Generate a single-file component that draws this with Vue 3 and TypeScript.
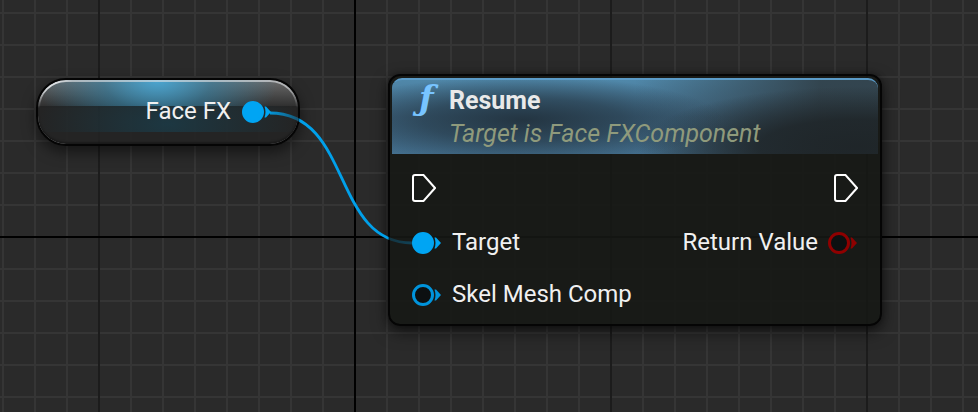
<script setup lang="ts">
type PinKind = 'exec' | 'object' | 'bool'

interface Pin {
  label: string
  kind: PinKind
  connected?: boolean
}

interface PinRow {
  input?: Pin
  output?: Pin
}

const variableNode: Pin = { label: 'Face FX', kind: 'object', connected: true }

const functionNode = {
  title: 'Resume',
  subtitle: 'Target is Face FXComponent',
}

const execRow: PinRow = {
  input: { label: '', kind: 'exec' },
  output: { label: '', kind: 'exec' },
}

const dataRows: PinRow[] = [
  {
    input: { label: 'Target', kind: 'object', connected: true },
    output: { label: 'Return Value', kind: 'bool' },
  },
  { input: { label: 'Skel Mesh Comp', kind: 'object' } },
]
</script>

<template>
  <main class="graph">
    <section class="node variable">
      <span class="label">{{ variableNode.label }}</span>
      <svg class="pin object connected" viewBox="0 0 30 24">
        <circle cx="11" cy="12" r="9.5" />
        <path d="M22.5 6.5H24L29 12 24 17.5H22.5Q24.5 12 22.5 6.5Z" />
      </svg>
    </section>

    <section class="node function">
      <header class="head">
        <span class="glyph">ƒ</span>
        <div class="titles">
          <h1 class="title">{{ functionNode.title }}</h1>
          <p class="subtitle">{{ functionNode.subtitle }}</p>
        </div>
      </header>

      <div class="pins">
        <div class="row exec-row">
          <svg v-if="execRow.input" class="exec" viewBox="0 0 24 28">
            <path d="M3 1H11.5L23 14 11.5 27H3Q1 27 1 25V3Q1 1 3 1Z" />
          </svg>
          <svg v-if="execRow.output" class="exec" viewBox="0 0 24 28">
            <path d="M3 1H11.5L23 14 11.5 27H3Q1 27 1 25V3Q1 1 3 1Z" />
          </svg>
        </div>
        <div v-for="(row, i) in dataRows" :key="i" class="row">
          <div v-if="row.input" class="slot">
            <svg class="pin" :class="[row.input.kind, { connected: row.input.connected }]" viewBox="0 0 30 24">
              <circle cx="11" cy="12" r="9.5" />
              <path d="M22.5 6.5H24L29 12 24 17.5H22.5Q24.5 12 22.5 6.5Z" />
            </svg>
            <span class="label">{{ row.input.label }}</span>
          </div>
          <div v-if="row.output" class="slot">
            <span class="label">{{ row.output.label }}</span>
            <svg class="pin" :class="[row.output.kind, { connected: row.output.connected }]" viewBox="0 0 30 24">
              <circle cx="11" cy="12" r="9.5" />
              <path d="M22.5 6.5H24L29 12 24 17.5H22.5Q24.5 12 22.5 6.5Z" />
            </svg>
          </div>
        </div>
      </div>
    </section>

    <svg class="wire" width="460" height="260" viewBox="0 0 460 260">
      <defs>
        <linearGradient id="wireFade" gradientUnits="userSpaceOnUse" x1="270" y1="0" x2="412" y2="0">
          <stop offset="0" stop-color="#00a0ea" stop-opacity="0.9" />
          <stop offset="0.2" stop-color="#00a0ea" stop-opacity="0.4" />
          <stop offset="0.21" stop-color="#00a0ea" />
          <stop offset="0.83" stop-color="#00a0ea" />
          <stop offset="0.84" stop-color="#00a0ea" stop-opacity="0.2" />
          <stop offset="1" stop-color="#00a0ea" stop-opacity="0.3" />
        </linearGradient>
      </defs>
      <path d="M270 113C352 113 332 243 412 243" fill="none" stroke="url(#wireFade)" stroke-width="2.8" />
    </svg>
  </main>
</template>

<style>
body {
  margin: 0;
  background: #2a2a2a;
}
</style>

<style scoped>
.graph {
  position: relative;
  min-height: 100vh;
  overflow: hidden;
  font-family: Roboto, "Liberation Sans", sans-serif;
  background-color: #2a2a2a;
  background-image:
    linear-gradient(#000, #000),
    linear-gradient(#000, #000),
    linear-gradient(90deg, #1c1c1c 2px, transparent 2px),
    linear-gradient(90deg, #353535 2px, transparent 2px),
    linear-gradient(#353535 2px, transparent 2px);
  background-size: 2px 100%, 100% 2px, 256px 100%, 32px 100%, 100% 32px;
  background-position: 354px 0, 0 236px, 98px 0, 2px 0, 0 12px;
  background-repeat: no-repeat, no-repeat, repeat, repeat, repeat;
}

.node {
  position: absolute;
  box-sizing: border-box;
  border: 2px solid #050505;
  color: #f0f0f0;
}

.label {
  padding-bottom: 2px;
  font-size: 24px;
  line-height: 24px;
  white-space: nowrap;
}

.variable {
  left: 36px;
  top: 78px;
  width: 264px;
  display: flex;
  align-items: center;
  justify-content: flex-end;
  gap: 11px;
  padding: 19px 26px 19px 20px;
  border-radius: 30px;
  background:
    radial-gradient(ellipse 120px 70px at 46% 0, rgba(72, 172, 220, 0.9), rgba(50, 136, 176, 0.55) 45%, transparent) 0 0 / 100% 26px no-repeat,
    linear-gradient(rgba(125, 125, 125, 0.8), rgba(60, 60, 60, 0.5)) 0 0 / 100% 26px no-repeat,
    radial-gradient(ellipse 130px 60px at 50% 70%, rgba(26, 62, 76, 0.75), transparent) 0 26px / 100% 26px no-repeat,
    rgba(35, 36, 36, 0.9);
  background-clip: padding-box;
  box-shadow: 0 6px 14px rgba(0, 0, 0, 0.5), inset 0 -2px 2px rgba(0, 0, 0, 0.3);
}

.variable::before {
  content: "";
  position: absolute;
  inset: 0;
  border: 2px solid #dcdfe2;
  border-radius: 28px;
  mask-image:
    linear-gradient(#000 8px, transparent 28px),
    linear-gradient(90deg, #000 20px, rgba(0, 0, 0, 0.65) 34px, rgba(0, 0, 0, 0.65));
  mask-composite: intersect;
}

.function {
  left: 388px;
  top: 74px;
  width: 494px;
  padding: 2px;
  border-radius: 12px;
  background: rgba(22, 24, 21, 0.88);
  box-shadow: 0 6px 16px rgba(0, 0, 0, 0.55), 0 0 6px rgba(0, 0, 0, 0.35);
}

.head {
  display: flex;
  box-sizing: border-box;
  height: 76px;
  padding: 4px 20px 4px 27px;
  border-top: 2px solid #5b9bc8;
  border-radius: 10px 10px 0 0;
  background:
    radial-gradient(ellipse 200px 44px at 27% 54%, rgba(34, 50, 62, 0.95), rgba(34, 50, 62, 0.6) 50%, transparent),
    radial-gradient(ellipse 220px 60px at 96% 90%, rgba(30, 36, 39, 0.95), rgba(30, 36, 39, 0.85) 45%, transparent),
    linear-gradient(90deg, transparent 50%, rgba(48, 62, 70, 0.9) 88%),
    linear-gradient(#5088aa, #416a87 50%, #44708f);
}

.glyph {
  width: 30px;
  color: #78c4ff;
  font: italic 700 34px/28px "DejaVu Serif", serif;
}

.title,
.subtitle {
  margin: 0;
  font-size: 25px;
  line-height: 33px;
  white-space: nowrap;
}

.title {
  color: #e9e9e9;
  font-weight: 700;
}

.subtitle {
  color: #8f9a7c;
  font-style: italic;
}

.pins {
  display: flex;
  flex-direction: column;
  gap: 26px;
  padding: 20px 20px 14px;
}

.row,
.slot {
  display: flex;
  align-items: center;
}

.row {
  justify-content: space-between;
}

.slot {
  gap: 10px;
}

.exec-row {
  padding-bottom: 2px;
}

.exec {
  width: 24px;
  height: 28px;
  fill: none;
  stroke: #fff;
  stroke-width: 2;
}

.pin {
  flex: none;
  width: 30px;
  height: 24px;
}

.pin circle {
  fill: #0c1011;
  stroke: currentColor;
  stroke-width: 3;
}

.pin path {
  fill: currentColor;
}

.pin.connected circle {
  fill: currentColor;
}

.object {
  color: #0094dc;
}

.object.connected {
  color: #00a5f3;
}

.bool {
  color: #8f0000;
}

.wire {
  position: absolute;
  left: 0;
  top: 0;
  pointer-events: none;
}
</style>
